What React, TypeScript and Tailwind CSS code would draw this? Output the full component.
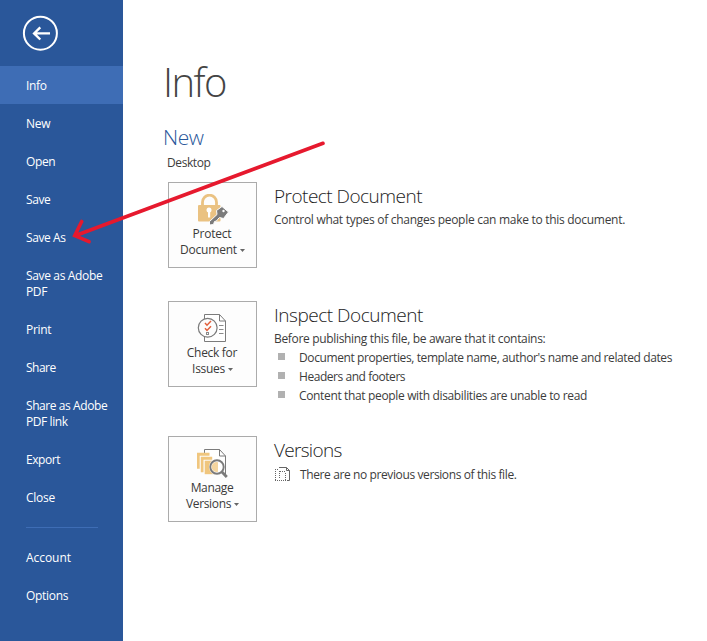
import React from "react";

const items: { label: string[]; track: string; active?: boolean }[] = [
  { label: ["Info"], track: "tracking-[-0.3px]", active: true },
  { label: ["New"], track: "tracking-[-0.3px]" },
  { label: ["Open"], track: "tracking-[-0.4px]" },
  { label: ["Save"], track: "tracking-[-0.4px]" },
  { label: ["Save As"], track: "tracking-[-0.4px]" },
  { label: ["Save as Adobe", "PDF"], track: "tracking-[-0.35px]" },
  { label: ["Print"], track: "tracking-[-0.3px]" },
  { label: ["Share"], track: "tracking-[-0.5px]" },
  { label: ["Share as Adobe", "PDF link"], track: "tracking-[-0.42px]" },
  { label: ["Export"], track: "tracking-[-0.45px]" },
  { label: ["Close"], track: "tracking-[-0.25px]" },
];

function NavItem({ label, track, active }: { label: string[]; track: string; active?: boolean }) {
  return (
    <div className={`pt-[12px] pb-[10px] pl-[26px] leading-4 whitespace-nowrap text-white ${track} ${active ? "bg-[#3e6db5]" : ""}`}>
      {label.map((l) => (
        <div key={l}>{l}</div>
      ))}
    </div>
  );
}

function LockIcon() {
  return (
    <svg width="35" height="32" viewBox="0 0 35 32" className="block">
      <path d="M7.500 12V8.200a7 7 0 0 1 14 0V12" fill="none" stroke="#eac282" strokeWidth="2.800" />
      <rect x="3" y="11" width="22.500" height="16.500" rx="1" fill="#eac282" />
      <circle cx="14" cy="16" r="2.500" fill="#fff" />
      <path d="M13 17h2.200v6.500H13z" fill="#fff" />
      <path d="M21.500 16.500 27 12.500 33.500 18 28.500 24.500 24.500 23.500 22.500 25.500 21.500 27 19.500 27.500 18.500 30.500 14.500 31V27.500L22 20.500Z" fill="#7b7b7b" stroke="#fdfdfd" strokeWidth="1" />
      <circle cx="28.500" cy="17" r="1.200" fill="#fdfdfd" />
    </svg>
  );
}

function CheckIcon() {
  return (
    <svg width="35" height="32" viewBox="0 0 35 32" className="block">
      <path d="M9.500 1.500h15l6 6.500v20.500h-21z" fill="#fff" stroke="#7b7b7b" />
      <path d="M24.500 1.500V8h6" fill="none" stroke="#7b7b7b" />
      <path d="M24 12.500h4.500M24 16.500h4.500M24 20.500h4.500" stroke="#8a8a8a" />
      <circle cx="12.700" cy="14.700" r="9.400" fill="#fdfdfd" stroke="#7b7b7b" strokeWidth="1.200" />
      <path d="m10 10 2 2.200 4-4.200M10 15.300l2 2.200 4-4.200" fill="none" stroke="#e2603c" strokeWidth="1.500" />
      <rect x="11.500" y="19.500" width="2" height="2" fill="none" stroke="#8a8a8a" />
    </svg>
  );
}

function VersionsIcon() {
  return (
    <svg width="35" height="32" viewBox="0 0 35 32" className="block">
      <path d="M9.500 5V1.500h15l6 6.500v20" fill="#fff" stroke="#7b7b7b" />
      <path d="M24.500 1.500V8h6" fill="none" stroke="#7b7b7b" />
      <path d="M2 4.700h12.500v3H4.700v13H2z" fill="#f0c67e" />
      <path d="M5.800 8.700h11.400v3H8.500v12.500H5.800z" fill="#f0c67e" />
      <path d="M9.700 12.700H21v13.500H9.700z" fill="#f0c67e" />
      <circle cx="22" cy="19" r="8" fill="#fdfdfd" />
      <circle cx="22" cy="19" r="6.700" fill="#fff" stroke="#7b7b7b" strokeWidth="1.900" />
      <path d="M23 14.200a5 5 0 1 0 0 9.600z" fill="#f4d59f" />
      <path d="m27 24 4.800 5" stroke="#7b7b7b" strokeWidth="2.800" />
    </svg>
  );
}

function Tile({ icon, a, b, track }: { icon: React.ReactNode; a: string; b: string; track: string }) {
  return (
    <div className="flex h-[86px] w-[89px] shrink-0 flex-col items-center border border-[#ababab] bg-[#fdfdfd] pt-[11px] leading-4 font-medium whitespace-nowrap text-[#3a3a3a]">
      {icon}
      <div className={`pr-px ${track}`}>{a}</div>
      <div className="flex items-center gap-[3px]">
        <span className={track}>{b}</span>
        <svg width="5" height="3" viewBox="0 0 5 3"><path d="M0 0h5L2.500 3z" fill="#666" /></svg>
      </div>
    </div>
  );
}

const heading = "text-[19px] leading-6 font-[350] whitespace-nowrap text-[#1c1c1c]";

const findings = [
  { text: "Document properties, template name, author's name and related dates", track: "tracking-[-0.4px]" },
  { text: "Headers and footers", track: "tracking-[-0.45px]" },
  { text: "Content that people with disabilities are unable to read", track: "tracking-[-0.35px]" },
];

export default function App() {
  return (
    <div className="relative flex h-[641px] w-[707px] overflow-hidden bg-white font-['Open_Sans','Noto_Sans',sans-serif] text-[12px] text-[#3c3c3c]">
      <nav className="w-[123px] shrink-0 bg-[#2a579a]">
        <div className="h-[66px] pt-[15px] pl-[22px]">
          <svg width="36" height="36" viewBox="0 0 36 36" fill="none" stroke="#fff" className="block">
            <circle cx="18.400" cy="18.200" r="16.500" strokeWidth="2" />
            <path d="M28 18.400H12.500M18.300 12.300l-6.200 6.100 6.200 6.100" strokeWidth="2.400" />
          </svg>
        </div>
        {items.map((i) => (
          <NavItem key={i.label[0]} label={i.label} track={i.track} active={i.active} />
        ))}
        <div className="mt-[11px] mb-[10px] ml-[26px] h-px w-[72px] bg-[#3e6db5]" />
        <NavItem label={["Account"]} track="tracking-[-0.05px]" />
        <NavItem label={["Options"]} track="tracking-[-0.3px]" />
      </nav>

      <main className="flex-1 pt-[54px] pl-[40px]">
        <h1 className="h-[69px] text-[40px] leading-[56px] font-light tracking-[-1.6px] text-[#444]">Info</h1>
        <h2 className="h-[31px] text-[21px] leading-7 font-[350] tracking-[-0.5px] text-[#2a579a]">New</h2>
        <div className="pl-[4px] leading-[18px] tracking-[-0.4px]">Desktop</div>

        <section className="mt-[10px] ml-[5px] flex h-[119px] gap-[17px]">
          <Tile icon={<LockIcon />} a="Protect" b="Document" track="tracking-[-0.22px]" />
          <div className="pt-[2px]">
            <h3 className={`${heading} tracking-[-0.52px]`}>Protect Document</h3>
            <p className="mt-[3px] leading-[18px] tracking-[-0.285px] whitespace-nowrap">Control what types of changes people can make to this document.</p>
          </div>
        </section>

        <section className="ml-[5px] flex h-[135px] gap-[17px]">
          <Tile icon={<CheckIcon />} a="Check for" b="Issues" track="tracking-[-0.3px]" />
          <div className="pt-[2px]">
            <h3 className={`${heading} tracking-[-0.48px]`}>Inspect Document</h3>
            <p className="mt-[3px] leading-[18px] tracking-[-0.33px] whitespace-nowrap">Before publishing this file, be aware that it contains:</p>
            <ul>
              {findings.map((f) => (
                <li key={f.text} className={`flex h-[19px] leading-[19px] whitespace-nowrap ${f.track}`}>
                  <span className="mt-[5px] mr-[14px] ml-[4px] size-[7px] bg-[#b1b1b1]" />
                  {f.text}
                </li>
              ))}
            </ul>
          </div>
        </section>

        <section className="ml-[5px] flex gap-[17px]">
          <Tile icon={<VersionsIcon />} a="Manage" b="Versions" track="tracking-[-0.35px]" />
          <div className="pt-[2px]">
            <h3 className={`${heading} tracking-[-0.7px]`}>Versions</h3>
            <div className="mt-[4px] flex gap-[10px] leading-[18px] tracking-[-0.39px] whitespace-nowrap">
              <svg width="16" height="16" viewBox="0 0 16 16" fill="none" stroke="#666" className="mt-px">
                <path d="M5 .5h7.500l3 3V13.500H13M12.500.5v3h3" />
                <path d="M1.500 2v12M1 13.500h11M5.500 4v8M11.500 6v7M6 4.500h5M1 2.500h3" strokeDasharray="1 1" />
              </svg>
              <span>There are no previous versions of this file.</span>
            </div>
          </div>
        </section>
      </main>

      <svg width="270" height="120" viewBox="0 0 270 120" className="pointer-events-none absolute top-[133px] left-[65px]" fill="none" stroke="#e6192e" strokeWidth="3.600" strokeLinecap="round">
        <path d="M258 10.300 10 102.700M16.700 88.500 9.700 102.700 24 108.700" />
      </svg>
    </div>
  );
}
